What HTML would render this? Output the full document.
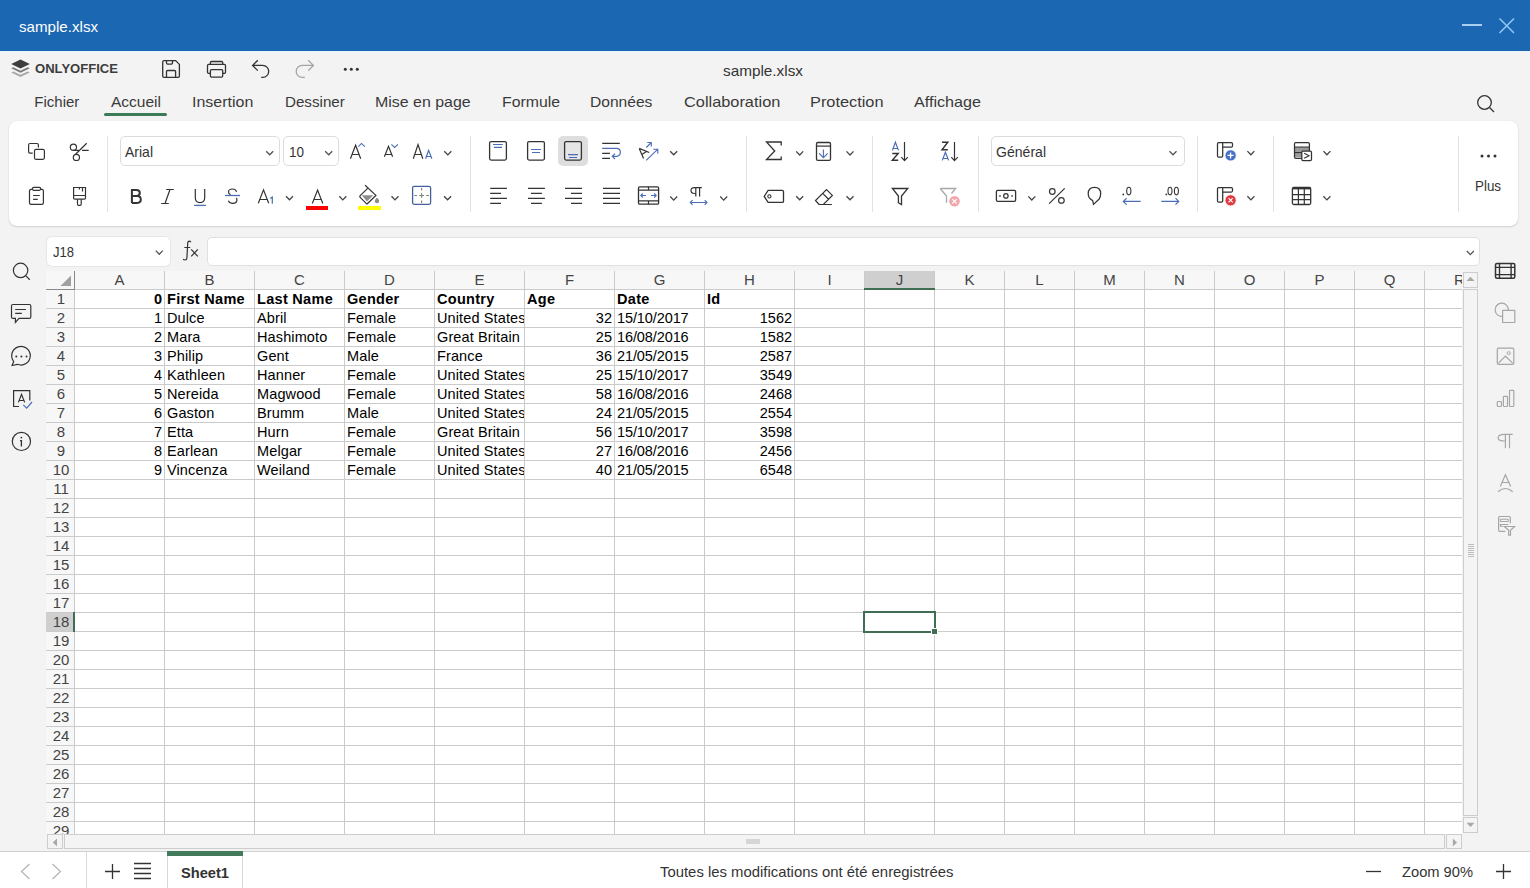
<!DOCTYPE html>
<html><head><meta charset="utf-8"><style>
html,body{margin:0;padding:0;width:1530px;height:888px;overflow:hidden;background:#f3f3f3;}
body{position:relative;font-family:"Liberation Sans",sans-serif;}
.t{position:absolute;white-space:nowrap;}
svg{overflow:visible;}
</style></head><body>
<div style="position:absolute;left:0px;top:0px;width:1530px;height:51px;background:#1c67b1"></div>
<div class="t" style="left:19.00px;top:19.30px;font-size:15px;line-height:15px;color:#ffffff;transform:scaleX(1.0083);transform-origin:0 0;">sample.xlsx</div>
<div style="position:absolute;left:0px;top:51px;width:1530px;height:837px;background:#f3f3f3"></div>
<div style="position:absolute;left:0px;top:51px;width:1530px;height:1px;background:#e4f6fb"></div>
<div class="t" style="left:34.50px;top:62.07px;font-size:13.5px;line-height:13.5px;color:#3d3d3d;font-weight:bold;transform:scaleX(0.9678);transform-origin:0 0;">ONLYOFFICE</div>
<div class="t" style="left:723.00px;top:63.30px;font-size:15px;line-height:15px;color:#333;transform:scaleX(1.0210);transform-origin:0 0;">sample.xlsx</div>
<div class="t" style="left:34.30px;top:94.30px;font-size:15px;line-height:15px;color:#3a3a3a;">Fichier</div>
<div class="t" style="left:111.00px;top:94.30px;font-size:15px;line-height:15px;color:#3a3a3a;transform:scaleX(1.0340);transform-origin:0 0;">Accueil</div>
<div class="t" style="left:192.00px;top:94.30px;font-size:15px;line-height:15px;color:#3a3a3a;transform:scaleX(1.0656);transform-origin:0 0;">Insertion</div>
<div class="t" style="left:284.60px;top:94.30px;font-size:15px;line-height:15px;color:#3a3a3a;transform:scaleX(1.0104);transform-origin:0 0;">Dessiner</div>
<div class="t" style="left:375.00px;top:94.30px;font-size:15px;line-height:15px;color:#3a3a3a;transform:scaleX(1.0627);transform-origin:0 0;">Mise en page</div>
<div class="t" style="left:502.00px;top:94.30px;font-size:15px;line-height:15px;color:#3a3a3a;transform:scaleX(1.0544);transform-origin:0 0;">Formule</div>
<div class="t" style="left:590.20px;top:94.30px;font-size:15px;line-height:15px;color:#3a3a3a;transform:scaleX(1.0393);transform-origin:0 0;">Données</div>
<div class="t" style="left:683.70px;top:94.30px;font-size:15px;line-height:15px;color:#3a3a3a;transform:scaleX(1.0896);transform-origin:0 0;">Collaboration</div>
<div class="t" style="left:810.00px;top:94.30px;font-size:15px;line-height:15px;color:#3a3a3a;transform:scaleX(1.0884);transform-origin:0 0;">Protection</div>
<div class="t" style="left:914.30px;top:94.30px;font-size:15px;line-height:15px;color:#3a3a3a;transform:scaleX(1.0760);transform-origin:0 0;">Affichage</div>
<div style="position:absolute;left:104px;top:113px;width:63px;height:3px;background:#3d7a56;border-radius:2px"></div>
<div style="position:absolute;left:9px;top:121px;width:1509px;height:105px;background:#fff;border-radius:8px;box-shadow:0 1px 2px rgba(0,0,0,0.14),0 0 1px rgba(0,0,0,0.10)"></div>
<div style="position:absolute;left:107px;top:136px;width:1px;height:76px;background:#e3e3e3"></div>
<div style="position:absolute;left:470px;top:136px;width:1px;height:76px;background:#e3e3e3"></div>
<div style="position:absolute;left:746px;top:136px;width:1px;height:76px;background:#e3e3e3"></div>
<div style="position:absolute;left:872px;top:136px;width:1px;height:76px;background:#e3e3e3"></div>
<div style="position:absolute;left:978px;top:136px;width:1px;height:76px;background:#e3e3e3"></div>
<div style="position:absolute;left:1197px;top:136px;width:1px;height:76px;background:#e3e3e3"></div>
<div style="position:absolute;left:1273px;top:136px;width:1px;height:76px;background:#e3e3e3"></div>
<div style="position:absolute;left:1458px;top:136px;width:1px;height:76px;background:#e3e3e3"></div>
<div style="position:absolute;left:120px;top:136px;width:160px;height:30px;background:#fff;border:1px solid #dcdcdc;border-radius:5px;box-sizing:border-box"></div>
<div class="t" style="left:125.00px;top:143.80px;font-size:15px;line-height:15px;color:#333;transform:scaleX(0.9331);transform-origin:0 0;">Arial</div>
<div style="position:absolute;left:283px;top:136px;width:56px;height:30px;background:#fff;border:1px solid #dcdcdc;border-radius:5px;box-sizing:border-box"></div>
<div class="t" style="left:289.00px;top:143.80px;font-size:15px;line-height:15px;color:#333;transform:scaleX(0.8991);transform-origin:0 0;">10</div>
<div style="position:absolute;left:306px;top:206px;width:22px;height:4px;background:#ff0000"></div>
<div style="position:absolute;left:358px;top:206px;width:23px;height:4px;background:#ffff00"></div>
<div style="position:absolute;left:558px;top:136px;width:30px;height:30px;background:#dedede;border-radius:5px"></div>
<div style="position:absolute;left:564px;top:141px;width:18px;height:19px;background:#e6e6e6"></div>
<div style="position:absolute;left:991px;top:136px;width:194px;height:30px;background:#fff;border:1px solid #dcdcdc;border-radius:5px;box-sizing:border-box"></div>
<div class="t" style="left:996.00px;top:144.30px;font-size:15px;line-height:15px;color:#333;transform:scaleX(0.9370);transform-origin:0 0;">Général</div>
<div class="t" style="left:1475.00px;top:178.30px;font-size:15px;line-height:15px;color:#333;transform:scaleX(0.8910);transform-origin:0 0;">Plus</div>
<div style="position:absolute;left:47px;top:237px;width:123px;height:29px;background:#fff;border-radius:5px;box-shadow:0 0 0 1px #e6e6e6"></div>
<div class="t" style="left:52.50px;top:244.30px;font-size:15px;line-height:15px;color:#333;transform:scaleX(0.8684);transform-origin:0 0;">J18</div>
<div style="position:absolute;left:207px;top:237px;width:1273px;height:29px;background:#fff;border-radius:5px;border:1px solid #e0e0e0;box-sizing:border-box"></div>
<div style="position:absolute;left:46px;top:271px;width:1416px;height:563px;overflow:hidden;background:#fff">
<div style="position:absolute;left:0px;top:0px;width:1416px;height:18px;background:#f7f7f7"></div>
<div style="position:absolute;left:0px;top:18px;width:28px;height:545px;background:#f7f7f7"></div>
<div style="position:absolute;left:818px;top:0px;width:70px;height:18px;background:#cfcfcf"></div>
<div style="position:absolute;left:0px;top:341px;width:28px;height:19px;background:#cfcfcf"></div>
<div style="position:absolute;left:28px;top:0px;width:1px;height:563px;background:#cbcbcb"></div>
<div style="position:absolute;left:118px;top:0px;width:1px;height:563px;background:#cbcbcb"></div>
<div style="position:absolute;left:208px;top:0px;width:1px;height:563px;background:#cbcbcb"></div>
<div style="position:absolute;left:298px;top:0px;width:1px;height:563px;background:#cbcbcb"></div>
<div style="position:absolute;left:388px;top:0px;width:1px;height:563px;background:#cbcbcb"></div>
<div style="position:absolute;left:478px;top:0px;width:1px;height:563px;background:#cbcbcb"></div>
<div style="position:absolute;left:568px;top:0px;width:1px;height:563px;background:#cbcbcb"></div>
<div style="position:absolute;left:658px;top:0px;width:1px;height:563px;background:#cbcbcb"></div>
<div style="position:absolute;left:748px;top:0px;width:1px;height:563px;background:#cbcbcb"></div>
<div style="position:absolute;left:818px;top:0px;width:1px;height:563px;background:#cbcbcb"></div>
<div style="position:absolute;left:888px;top:0px;width:1px;height:563px;background:#cbcbcb"></div>
<div style="position:absolute;left:958px;top:0px;width:1px;height:563px;background:#cbcbcb"></div>
<div style="position:absolute;left:1028px;top:0px;width:1px;height:563px;background:#cbcbcb"></div>
<div style="position:absolute;left:1098px;top:0px;width:1px;height:563px;background:#cbcbcb"></div>
<div style="position:absolute;left:1168px;top:0px;width:1px;height:563px;background:#cbcbcb"></div>
<div style="position:absolute;left:1238px;top:0px;width:1px;height:563px;background:#cbcbcb"></div>
<div style="position:absolute;left:1308px;top:0px;width:1px;height:563px;background:#cbcbcb"></div>
<div style="position:absolute;left:1378px;top:0px;width:1px;height:563px;background:#cbcbcb"></div>
<div style="position:absolute;left:1448px;top:0px;width:1px;height:563px;background:#cbcbcb"></div>
<div style="position:absolute;left:1518px;top:0px;width:1px;height:563px;background:#cbcbcb"></div>
<div style="position:absolute;left:0px;top:18px;width:1416px;height:1px;background:#cbcbcb"></div>
<div style="position:absolute;left:0px;top:37px;width:1416px;height:1px;background:#cbcbcb"></div>
<div style="position:absolute;left:0px;top:56px;width:1416px;height:1px;background:#cbcbcb"></div>
<div style="position:absolute;left:0px;top:75px;width:1416px;height:1px;background:#cbcbcb"></div>
<div style="position:absolute;left:0px;top:94px;width:1416px;height:1px;background:#cbcbcb"></div>
<div style="position:absolute;left:0px;top:113px;width:1416px;height:1px;background:#cbcbcb"></div>
<div style="position:absolute;left:0px;top:132px;width:1416px;height:1px;background:#cbcbcb"></div>
<div style="position:absolute;left:0px;top:151px;width:1416px;height:1px;background:#cbcbcb"></div>
<div style="position:absolute;left:0px;top:170px;width:1416px;height:1px;background:#cbcbcb"></div>
<div style="position:absolute;left:0px;top:189px;width:1416px;height:1px;background:#cbcbcb"></div>
<div style="position:absolute;left:0px;top:208px;width:1416px;height:1px;background:#cbcbcb"></div>
<div style="position:absolute;left:0px;top:227px;width:1416px;height:1px;background:#cbcbcb"></div>
<div style="position:absolute;left:0px;top:246px;width:1416px;height:1px;background:#cbcbcb"></div>
<div style="position:absolute;left:0px;top:265px;width:1416px;height:1px;background:#cbcbcb"></div>
<div style="position:absolute;left:0px;top:284px;width:1416px;height:1px;background:#cbcbcb"></div>
<div style="position:absolute;left:0px;top:303px;width:1416px;height:1px;background:#cbcbcb"></div>
<div style="position:absolute;left:0px;top:322px;width:1416px;height:1px;background:#cbcbcb"></div>
<div style="position:absolute;left:0px;top:341px;width:1416px;height:1px;background:#cbcbcb"></div>
<div style="position:absolute;left:0px;top:360px;width:1416px;height:1px;background:#cbcbcb"></div>
<div style="position:absolute;left:0px;top:379px;width:1416px;height:1px;background:#cbcbcb"></div>
<div style="position:absolute;left:0px;top:398px;width:1416px;height:1px;background:#cbcbcb"></div>
<div style="position:absolute;left:0px;top:417px;width:1416px;height:1px;background:#cbcbcb"></div>
<div style="position:absolute;left:0px;top:436px;width:1416px;height:1px;background:#cbcbcb"></div>
<div style="position:absolute;left:0px;top:455px;width:1416px;height:1px;background:#cbcbcb"></div>
<div style="position:absolute;left:0px;top:474px;width:1416px;height:1px;background:#cbcbcb"></div>
<div style="position:absolute;left:0px;top:493px;width:1416px;height:1px;background:#cbcbcb"></div>
<div style="position:absolute;left:0px;top:512px;width:1416px;height:1px;background:#cbcbcb"></div>
<div style="position:absolute;left:0px;top:531px;width:1416px;height:1px;background:#cbcbcb"></div>
<div style="position:absolute;left:0px;top:550px;width:1416px;height:1px;background:#cbcbcb"></div>
<div style="position:absolute;left:0px;top:569px;width:1416px;height:1px;background:#cbcbcb"></div>
<div style="position:absolute;left:0px;top:588px;width:1416px;height:1px;background:#cbcbcb"></div>
<div style="position:absolute;left:28px;top:0px;width:1px;height:19px;background:#8a8a8a"></div>
<div style="position:absolute;left:0px;top:18px;width:29px;height:1px;background:#8a8a8a"></div>
<svg style="position:absolute;left:14px;top:4px" width="12" height="12"><path d="M11 0.5 V11 H0.5 Z" fill="#a0a0a0"/></svg>
<div style="position:absolute;left:818px;top:17px;width:71px;height:2px;background:#3f6e54"></div>
<div style="position:absolute;left:27px;top:341px;width:2px;height:20px;background:#3f6e54"></div>
<div class="t" style="left:68.50px;top:1.30px;font-size:15px;line-height:15px;color:#444;">A</div>
<div class="t" style="left:158.50px;top:1.30px;font-size:15px;line-height:15px;color:#444;">B</div>
<div class="t" style="left:248.08px;top:1.30px;font-size:15px;line-height:15px;color:#444;">C</div>
<div class="t" style="left:338.08px;top:1.30px;font-size:15px;line-height:15px;color:#444;">D</div>
<div class="t" style="left:428.50px;top:1.30px;font-size:15px;line-height:15px;color:#444;">E</div>
<div class="t" style="left:518.92px;top:1.30px;font-size:15px;line-height:15px;color:#444;">F</div>
<div class="t" style="left:607.67px;top:1.30px;font-size:15px;line-height:15px;color:#444;">G</div>
<div class="t" style="left:698.08px;top:1.30px;font-size:15px;line-height:15px;color:#444;">H</div>
<div class="t" style="left:781.42px;top:1.30px;font-size:15px;line-height:15px;color:#444;">I</div>
<div class="t" style="left:849.75px;top:1.30px;font-size:15px;line-height:15px;color:#444;">J</div>
<div class="t" style="left:918.50px;top:1.30px;font-size:15px;line-height:15px;color:#444;">K</div>
<div class="t" style="left:989.33px;top:1.30px;font-size:15px;line-height:15px;color:#444;">L</div>
<div class="t" style="left:1057.25px;top:1.30px;font-size:15px;line-height:15px;color:#444;">M</div>
<div class="t" style="left:1128.08px;top:1.30px;font-size:15px;line-height:15px;color:#444;">N</div>
<div class="t" style="left:1197.67px;top:1.30px;font-size:15px;line-height:15px;color:#444;">O</div>
<div class="t" style="left:1268.50px;top:1.30px;font-size:15px;line-height:15px;color:#444;">P</div>
<div class="t" style="left:1337.67px;top:1.30px;font-size:15px;line-height:15px;color:#444;">Q</div>
<div class="t" style="left:1408.08px;top:1.30px;font-size:15px;line-height:15px;color:#444;">R</div>
<div class="t" style="left:1478.50px;top:1.30px;font-size:15px;line-height:15px;color:#444;">S</div>
<div class="t" style="left:10.83px;top:20.30px;font-size:15px;line-height:15px;color:#444;">1</div>
<div class="t" style="left:10.83px;top:39.30px;font-size:15px;line-height:15px;color:#444;">2</div>
<div class="t" style="left:10.83px;top:58.30px;font-size:15px;line-height:15px;color:#444;">3</div>
<div class="t" style="left:10.83px;top:77.30px;font-size:15px;line-height:15px;color:#444;">4</div>
<div class="t" style="left:10.83px;top:96.30px;font-size:15px;line-height:15px;color:#444;">5</div>
<div class="t" style="left:10.83px;top:115.30px;font-size:15px;line-height:15px;color:#444;">6</div>
<div class="t" style="left:10.83px;top:134.30px;font-size:15px;line-height:15px;color:#444;">7</div>
<div class="t" style="left:10.83px;top:153.30px;font-size:15px;line-height:15px;color:#444;">8</div>
<div class="t" style="left:10.83px;top:172.30px;font-size:15px;line-height:15px;color:#444;">9</div>
<div class="t" style="left:6.66px;top:191.30px;font-size:15px;line-height:15px;color:#444;">10</div>
<div class="t" style="left:7.22px;top:210.30px;font-size:15px;line-height:15px;color:#444;">11</div>
<div class="t" style="left:6.66px;top:229.30px;font-size:15px;line-height:15px;color:#444;">12</div>
<div class="t" style="left:6.66px;top:248.30px;font-size:15px;line-height:15px;color:#444;">13</div>
<div class="t" style="left:6.66px;top:267.30px;font-size:15px;line-height:15px;color:#444;">14</div>
<div class="t" style="left:6.66px;top:286.30px;font-size:15px;line-height:15px;color:#444;">15</div>
<div class="t" style="left:6.66px;top:305.30px;font-size:15px;line-height:15px;color:#444;">16</div>
<div class="t" style="left:6.66px;top:324.30px;font-size:15px;line-height:15px;color:#444;">17</div>
<div class="t" style="left:6.66px;top:343.30px;font-size:15px;line-height:15px;color:#444;">18</div>
<div class="t" style="left:6.66px;top:362.30px;font-size:15px;line-height:15px;color:#444;">19</div>
<div class="t" style="left:6.66px;top:381.30px;font-size:15px;line-height:15px;color:#444;">20</div>
<div class="t" style="left:6.66px;top:400.30px;font-size:15px;line-height:15px;color:#444;">21</div>
<div class="t" style="left:6.66px;top:419.30px;font-size:15px;line-height:15px;color:#444;">22</div>
<div class="t" style="left:6.66px;top:438.30px;font-size:15px;line-height:15px;color:#444;">23</div>
<div class="t" style="left:6.66px;top:457.30px;font-size:15px;line-height:15px;color:#444;">24</div>
<div class="t" style="left:6.66px;top:476.30px;font-size:15px;line-height:15px;color:#444;">25</div>
<div class="t" style="left:6.66px;top:495.30px;font-size:15px;line-height:15px;color:#444;">26</div>
<div class="t" style="left:6.66px;top:514.30px;font-size:15px;line-height:15px;color:#444;">27</div>
<div class="t" style="left:6.66px;top:533.30px;font-size:15px;line-height:15px;color:#444;">28</div>
<div class="t" style="left:6.66px;top:552.30px;font-size:15px;line-height:15px;color:#444;">29</div>
<div class="t" style="left:107.94px;top:20.73px;font-size:14.5px;line-height:14.5px;color:#000;font-weight:bold;">0</div>
<div class="t" style="left:121.00px;top:20.73px;font-size:14.5px;line-height:14.5px;color:#000;font-weight:bold;letter-spacing:0.3px;width:87px;height:20px;overflow:hidden;">First Name</div>
<div class="t" style="left:211.00px;top:20.73px;font-size:14.5px;line-height:14.5px;color:#000;font-weight:bold;letter-spacing:0.3px;width:87px;height:20px;overflow:hidden;">Last Name</div>
<div class="t" style="left:301.00px;top:20.73px;font-size:14.5px;line-height:14.5px;color:#000;font-weight:bold;letter-spacing:0.3px;width:87px;height:20px;overflow:hidden;">Gender</div>
<div class="t" style="left:391.00px;top:20.73px;font-size:14.5px;line-height:14.5px;color:#000;font-weight:bold;letter-spacing:0.3px;width:87px;height:20px;overflow:hidden;">Country</div>
<div class="t" style="left:481.00px;top:20.73px;font-size:14.5px;line-height:14.5px;color:#000;font-weight:bold;letter-spacing:0.3px;width:87px;height:20px;overflow:hidden;">Age</div>
<div class="t" style="left:571.00px;top:20.73px;font-size:14.5px;line-height:14.5px;color:#000;font-weight:bold;letter-spacing:0.3px;width:87px;height:20px;overflow:hidden;">Date</div>
<div class="t" style="left:661.00px;top:20.73px;font-size:14.5px;line-height:14.5px;color:#000;font-weight:bold;letter-spacing:0.3px;width:87px;height:20px;overflow:hidden;">Id</div>
<div class="t" style="left:107.94px;top:39.73px;font-size:14.5px;line-height:14.5px;color:#000;">1</div>
<div class="t" style="left:121.00px;top:39.73px;font-size:14.5px;line-height:14.5px;color:#000;letter-spacing:0.12px;width:87px;height:20px;overflow:hidden;">Dulce</div>
<div class="t" style="left:211.00px;top:39.73px;font-size:14.5px;line-height:14.5px;color:#000;letter-spacing:0.12px;width:87px;height:20px;overflow:hidden;">Abril</div>
<div class="t" style="left:301.00px;top:39.73px;font-size:14.5px;line-height:14.5px;color:#000;letter-spacing:0.12px;width:87px;height:20px;overflow:hidden;">Female</div>
<div class="t" style="left:391.00px;top:39.73px;font-size:14.5px;line-height:14.5px;color:#000;letter-spacing:0.12px;width:87px;height:20px;overflow:hidden;">United States</div>
<div class="t" style="left:549.87px;top:39.73px;font-size:14.5px;line-height:14.5px;color:#000;">32</div>
<div class="t" style="left:571.00px;top:39.73px;font-size:14.5px;line-height:14.5px;color:#000;letter-spacing:-0.1px;width:87px;height:20px;overflow:hidden;">15/10/2017</div>
<div class="t" style="left:713.75px;top:39.73px;font-size:14.5px;line-height:14.5px;color:#000;">1562</div>
<div class="t" style="left:107.94px;top:58.73px;font-size:14.5px;line-height:14.5px;color:#000;">2</div>
<div class="t" style="left:121.00px;top:58.73px;font-size:14.5px;line-height:14.5px;color:#000;letter-spacing:0.12px;width:87px;height:20px;overflow:hidden;">Mara</div>
<div class="t" style="left:211.00px;top:58.73px;font-size:14.5px;line-height:14.5px;color:#000;letter-spacing:0.12px;width:87px;height:20px;overflow:hidden;">Hashimoto</div>
<div class="t" style="left:301.00px;top:58.73px;font-size:14.5px;line-height:14.5px;color:#000;letter-spacing:0.12px;width:87px;height:20px;overflow:hidden;">Female</div>
<div class="t" style="left:391.00px;top:58.73px;font-size:14.5px;line-height:14.5px;color:#000;letter-spacing:0.12px;width:87px;height:20px;overflow:hidden;">Great Britain</div>
<div class="t" style="left:549.87px;top:58.73px;font-size:14.5px;line-height:14.5px;color:#000;">25</div>
<div class="t" style="left:571.00px;top:58.73px;font-size:14.5px;line-height:14.5px;color:#000;letter-spacing:-0.1px;width:87px;height:20px;overflow:hidden;">16/08/2016</div>
<div class="t" style="left:713.75px;top:58.73px;font-size:14.5px;line-height:14.5px;color:#000;">1582</div>
<div class="t" style="left:107.94px;top:77.73px;font-size:14.5px;line-height:14.5px;color:#000;">3</div>
<div class="t" style="left:121.00px;top:77.73px;font-size:14.5px;line-height:14.5px;color:#000;letter-spacing:0.12px;width:87px;height:20px;overflow:hidden;">Philip</div>
<div class="t" style="left:211.00px;top:77.73px;font-size:14.5px;line-height:14.5px;color:#000;letter-spacing:0.12px;width:87px;height:20px;overflow:hidden;">Gent</div>
<div class="t" style="left:301.00px;top:77.73px;font-size:14.5px;line-height:14.5px;color:#000;letter-spacing:0.12px;width:87px;height:20px;overflow:hidden;">Male</div>
<div class="t" style="left:391.00px;top:77.73px;font-size:14.5px;line-height:14.5px;color:#000;letter-spacing:0.12px;width:87px;height:20px;overflow:hidden;">France</div>
<div class="t" style="left:549.87px;top:77.73px;font-size:14.5px;line-height:14.5px;color:#000;">36</div>
<div class="t" style="left:571.00px;top:77.73px;font-size:14.5px;line-height:14.5px;color:#000;letter-spacing:-0.1px;width:87px;height:20px;overflow:hidden;">21/05/2015</div>
<div class="t" style="left:713.75px;top:77.73px;font-size:14.5px;line-height:14.5px;color:#000;">2587</div>
<div class="t" style="left:107.94px;top:96.73px;font-size:14.5px;line-height:14.5px;color:#000;">4</div>
<div class="t" style="left:121.00px;top:96.73px;font-size:14.5px;line-height:14.5px;color:#000;letter-spacing:0.12px;width:87px;height:20px;overflow:hidden;">Kathleen</div>
<div class="t" style="left:211.00px;top:96.73px;font-size:14.5px;line-height:14.5px;color:#000;letter-spacing:0.12px;width:87px;height:20px;overflow:hidden;">Hanner</div>
<div class="t" style="left:301.00px;top:96.73px;font-size:14.5px;line-height:14.5px;color:#000;letter-spacing:0.12px;width:87px;height:20px;overflow:hidden;">Female</div>
<div class="t" style="left:391.00px;top:96.73px;font-size:14.5px;line-height:14.5px;color:#000;letter-spacing:0.12px;width:87px;height:20px;overflow:hidden;">United States</div>
<div class="t" style="left:549.87px;top:96.73px;font-size:14.5px;line-height:14.5px;color:#000;">25</div>
<div class="t" style="left:571.00px;top:96.73px;font-size:14.5px;line-height:14.5px;color:#000;letter-spacing:-0.1px;width:87px;height:20px;overflow:hidden;">15/10/2017</div>
<div class="t" style="left:713.75px;top:96.73px;font-size:14.5px;line-height:14.5px;color:#000;">3549</div>
<div class="t" style="left:107.94px;top:115.73px;font-size:14.5px;line-height:14.5px;color:#000;">5</div>
<div class="t" style="left:121.00px;top:115.73px;font-size:14.5px;line-height:14.5px;color:#000;letter-spacing:0.12px;width:87px;height:20px;overflow:hidden;">Nereida</div>
<div class="t" style="left:211.00px;top:115.73px;font-size:14.5px;line-height:14.5px;color:#000;letter-spacing:0.12px;width:87px;height:20px;overflow:hidden;">Magwood</div>
<div class="t" style="left:301.00px;top:115.73px;font-size:14.5px;line-height:14.5px;color:#000;letter-spacing:0.12px;width:87px;height:20px;overflow:hidden;">Female</div>
<div class="t" style="left:391.00px;top:115.73px;font-size:14.5px;line-height:14.5px;color:#000;letter-spacing:0.12px;width:87px;height:20px;overflow:hidden;">United States</div>
<div class="t" style="left:549.87px;top:115.73px;font-size:14.5px;line-height:14.5px;color:#000;">58</div>
<div class="t" style="left:571.00px;top:115.73px;font-size:14.5px;line-height:14.5px;color:#000;letter-spacing:-0.1px;width:87px;height:20px;overflow:hidden;">16/08/2016</div>
<div class="t" style="left:713.75px;top:115.73px;font-size:14.5px;line-height:14.5px;color:#000;">2468</div>
<div class="t" style="left:107.94px;top:134.73px;font-size:14.5px;line-height:14.5px;color:#000;">6</div>
<div class="t" style="left:121.00px;top:134.73px;font-size:14.5px;line-height:14.5px;color:#000;letter-spacing:0.12px;width:87px;height:20px;overflow:hidden;">Gaston</div>
<div class="t" style="left:211.00px;top:134.73px;font-size:14.5px;line-height:14.5px;color:#000;letter-spacing:0.12px;width:87px;height:20px;overflow:hidden;">Brumm</div>
<div class="t" style="left:301.00px;top:134.73px;font-size:14.5px;line-height:14.5px;color:#000;letter-spacing:0.12px;width:87px;height:20px;overflow:hidden;">Male</div>
<div class="t" style="left:391.00px;top:134.73px;font-size:14.5px;line-height:14.5px;color:#000;letter-spacing:0.12px;width:87px;height:20px;overflow:hidden;">United States</div>
<div class="t" style="left:549.87px;top:134.73px;font-size:14.5px;line-height:14.5px;color:#000;">24</div>
<div class="t" style="left:571.00px;top:134.73px;font-size:14.5px;line-height:14.5px;color:#000;letter-spacing:-0.1px;width:87px;height:20px;overflow:hidden;">21/05/2015</div>
<div class="t" style="left:713.75px;top:134.73px;font-size:14.5px;line-height:14.5px;color:#000;">2554</div>
<div class="t" style="left:107.94px;top:153.73px;font-size:14.5px;line-height:14.5px;color:#000;">7</div>
<div class="t" style="left:121.00px;top:153.73px;font-size:14.5px;line-height:14.5px;color:#000;letter-spacing:0.12px;width:87px;height:20px;overflow:hidden;">Etta</div>
<div class="t" style="left:211.00px;top:153.73px;font-size:14.5px;line-height:14.5px;color:#000;letter-spacing:0.12px;width:87px;height:20px;overflow:hidden;">Hurn</div>
<div class="t" style="left:301.00px;top:153.73px;font-size:14.5px;line-height:14.5px;color:#000;letter-spacing:0.12px;width:87px;height:20px;overflow:hidden;">Female</div>
<div class="t" style="left:391.00px;top:153.73px;font-size:14.5px;line-height:14.5px;color:#000;letter-spacing:0.12px;width:87px;height:20px;overflow:hidden;">Great Britain</div>
<div class="t" style="left:549.87px;top:153.73px;font-size:14.5px;line-height:14.5px;color:#000;">56</div>
<div class="t" style="left:571.00px;top:153.73px;font-size:14.5px;line-height:14.5px;color:#000;letter-spacing:-0.1px;width:87px;height:20px;overflow:hidden;">15/10/2017</div>
<div class="t" style="left:713.75px;top:153.73px;font-size:14.5px;line-height:14.5px;color:#000;">3598</div>
<div class="t" style="left:107.94px;top:172.73px;font-size:14.5px;line-height:14.5px;color:#000;">8</div>
<div class="t" style="left:121.00px;top:172.73px;font-size:14.5px;line-height:14.5px;color:#000;letter-spacing:0.12px;width:87px;height:20px;overflow:hidden;">Earlean</div>
<div class="t" style="left:211.00px;top:172.73px;font-size:14.5px;line-height:14.5px;color:#000;letter-spacing:0.12px;width:87px;height:20px;overflow:hidden;">Melgar</div>
<div class="t" style="left:301.00px;top:172.73px;font-size:14.5px;line-height:14.5px;color:#000;letter-spacing:0.12px;width:87px;height:20px;overflow:hidden;">Female</div>
<div class="t" style="left:391.00px;top:172.73px;font-size:14.5px;line-height:14.5px;color:#000;letter-spacing:0.12px;width:87px;height:20px;overflow:hidden;">United States</div>
<div class="t" style="left:549.87px;top:172.73px;font-size:14.5px;line-height:14.5px;color:#000;">27</div>
<div class="t" style="left:571.00px;top:172.73px;font-size:14.5px;line-height:14.5px;color:#000;letter-spacing:-0.1px;width:87px;height:20px;overflow:hidden;">16/08/2016</div>
<div class="t" style="left:713.75px;top:172.73px;font-size:14.5px;line-height:14.5px;color:#000;">2456</div>
<div class="t" style="left:107.94px;top:191.73px;font-size:14.5px;line-height:14.5px;color:#000;">9</div>
<div class="t" style="left:121.00px;top:191.73px;font-size:14.5px;line-height:14.5px;color:#000;letter-spacing:0.12px;width:87px;height:20px;overflow:hidden;">Vincenza</div>
<div class="t" style="left:211.00px;top:191.73px;font-size:14.5px;line-height:14.5px;color:#000;letter-spacing:0.12px;width:87px;height:20px;overflow:hidden;">Weiland</div>
<div class="t" style="left:301.00px;top:191.73px;font-size:14.5px;line-height:14.5px;color:#000;letter-spacing:0.12px;width:87px;height:20px;overflow:hidden;">Female</div>
<div class="t" style="left:391.00px;top:191.73px;font-size:14.5px;line-height:14.5px;color:#000;letter-spacing:0.12px;width:87px;height:20px;overflow:hidden;">United States</div>
<div class="t" style="left:549.87px;top:191.73px;font-size:14.5px;line-height:14.5px;color:#000;">40</div>
<div class="t" style="left:571.00px;top:191.73px;font-size:14.5px;line-height:14.5px;color:#000;letter-spacing:-0.1px;width:87px;height:20px;overflow:hidden;">21/05/2015</div>
<div class="t" style="left:713.75px;top:191.73px;font-size:14.5px;line-height:14.5px;color:#000;">6548</div>
<div style="position:absolute;left:817px;top:340px;width:72px;height:2px;background:#3f6e54"></div>
<div style="position:absolute;left:817px;top:360px;width:68px;height:2px;background:#3f6e54"></div>
<div style="position:absolute;left:817px;top:340px;width:2px;height:22px;background:#3f6e54"></div>
<div style="position:absolute;left:888px;top:340px;width:2px;height:17px;background:#3f6e54"></div>
<div style="position:absolute;left:885px;top:357px;width:7px;height:7px;background:#fff"></div>
<div style="position:absolute;left:886px;top:358px;width:5px;height:5px;background:#3f6e54"></div>
</div>
<div style="position:absolute;left:1462px;top:271px;width:18px;height:564px;background:#f3f3f3"></div>
<div style="position:absolute;left:1463px;top:272px;width:15px;height:16px;background:#f4f4f4;border:1px solid #cdcdcd;box-sizing:border-box"></div>
<svg style="position:absolute;left:1466px;top:276px;" width="9" height="6" viewBox="0 0 9 6" fill="none" stroke="#3d3d3d" stroke-width="1"><path d="M0.5 5 L4.5 0.8 L8.5 5 Z" fill="#a8a8a8" stroke="none"/></svg>
<div style="position:absolute;left:1463px;top:289px;width:15px;height:527px;background:#f4f4f4;border:1px solid #cdcdcd;box-sizing:border-box"></div>
<div style="position:absolute;left:1468px;top:544px;width:6px;height:1px;background:#bdbdbd"></div>
<div style="position:absolute;left:1468px;top:546px;width:6px;height:1px;background:#bdbdbd"></div>
<div style="position:absolute;left:1468px;top:548px;width:6px;height:1px;background:#bdbdbd"></div>
<div style="position:absolute;left:1468px;top:550px;width:6px;height:1px;background:#bdbdbd"></div>
<div style="position:absolute;left:1468px;top:552px;width:6px;height:1px;background:#bdbdbd"></div>
<div style="position:absolute;left:1468px;top:554px;width:6px;height:1px;background:#bdbdbd"></div>
<div style="position:absolute;left:1468px;top:556px;width:6px;height:1px;background:#bdbdbd"></div>
<div style="position:absolute;left:1463px;top:817px;width:15px;height:16px;background:#f4f4f4;border:1px solid #cdcdcd;box-sizing:border-box"></div>
<svg style="position:absolute;left:1466px;top:822px;" width="9" height="6" viewBox="0 0 9 6" fill="none" stroke="#3d3d3d" stroke-width="1"><path d="M0.5 0.8 L4.5 5 L8.5 0.8 Z" fill="#a8a8a8" stroke="none"/></svg>
<div style="position:absolute;left:46px;top:834px;width:1416px;height:15px;background:#f3f3f3"></div>
<div style="position:absolute;left:47px;top:834px;width:16px;height:15px;background:#f4f4f4;border:1px solid #cdcdcd;box-sizing:border-box"></div>
<svg style="position:absolute;left:52px;top:838px;" width="6" height="9" viewBox="0 0 6 9" fill="none" stroke="#3d3d3d" stroke-width="1"><path d="M5 0.5 L0.8 4.5 L5 8.5 Z" fill="#a8a8a8" stroke="none"/></svg>
<div style="position:absolute;left:64px;top:834px;width:1381px;height:15px;background:#f4f4f4;border:1px solid #cdcdcd;box-sizing:border-box"></div>
<div style="position:absolute;left:746px;top:839px;width:14px;height:5px;background:#d6d6d6"></div>
<div style="position:absolute;left:1446px;top:834px;width:16px;height:15px;background:#f4f4f4;border:1px solid #cdcdcd;box-sizing:border-box"></div>
<svg style="position:absolute;left:1452px;top:838px;" width="6" height="9" viewBox="0 0 6 9" fill="none" stroke="#3d3d3d" stroke-width="1"><path d="M0.8 0.5 L5 4.5 L0.8 8.5 Z" fill="#a8a8a8" stroke="none"/></svg>
<div style="position:absolute;left:0px;top:851px;width:1530px;height:37px;background:#fff"></div>
<div style="position:absolute;left:0px;top:851px;width:1530px;height:1px;background:#d0d0d0"></div>
<div style="position:absolute;left:86px;top:852px;width:1px;height:36px;background:#dadada"></div>
<div style="position:absolute;left:167px;top:851px;width:76px;height:37px;background:#fff;border-left:1px solid #d8d8d8;border-right:1px solid #d8d8d8;box-sizing:border-box"></div>
<div style="position:absolute;left:167px;top:851px;width:76px;height:5px;background:#437a5c"></div>
<div class="t" style="left:180.50px;top:865.30px;font-size:15px;line-height:15px;color:#333;font-weight:bold;transform:scaleX(0.9759);transform-origin:0 0;">Sheet1</div>
<div class="t" style="left:660.40px;top:864.30px;font-size:15px;line-height:15px;color:#333;transform:scaleX(0.9913);transform-origin:0 0;">Toutes les modifications ont été enregistrées</div>
<div class="t" style="left:1402.00px;top:864.30px;font-size:15px;line-height:15px;color:#333;transform:scaleX(0.9789);transform-origin:0 0;">Zoom 90%</div>
<svg style="position:absolute;left:0;top:0" width="1530" height="888" viewBox="0 0 1530 888" fill="none"><path d="M1462 25 H1482" stroke="#a9cdee" stroke-width="2" /><path d="M1499.5 18.5 L1514 33 M1514 18.5 L1499.5 33" stroke="#8ec5f4" stroke-width="1.6" /><path d="M20.5 59.5 L29.8 64 L20.5 68.4 L11.2 64 Z" fill="#3d3d3d" stroke="none"/><path d="M11.2 68.3 L13.4 67.3 L20.5 70.7 L27.6 67.3 L29.8 68.3 L20.5 72.8 Z" fill="#7a7a7a" stroke="none"/><path d="M11.2 72.4 L13.4 71.4 L20.5 74.8 L27.6 71.4 L29.8 72.4 L20.5 76.9 Z" fill="#a8a8a8" stroke="none"/><path d="M162.7 62 Q162.7 60.6 164.1 60.6 H175.6 L179.4 64.4 V75.9 Q179.4 77.3 178 77.3 H164.1 Q162.7 77.3 162.7 75.9 Z" stroke="#333333" stroke-width="1.3" /><path d="M166.5 60.6 V63 Q166.5 64.1 167.6 64.1 H171.4 Q172.5 64.1 172.5 63 V60.6" stroke="#333333" stroke-width="1.3" /><path d="M166.5 77.3 V71.6 Q166.5 70.5 167.6 70.5 H174.5 Q175.6 70.5 175.6 71.6 V77.3" stroke="#333333" stroke-width="1.3" /><path d="M210.4 64.4 V62.6 Q210.4 61.5 211.5 61.5 H221.6 Q222.7 61.5 222.7 62.6 V64.4" stroke="#333333" stroke-width="1.3" /><path d="M210.4 73.3 H208.6 Q207.5 73.3 207.5 72.2 V65.5 Q207.5 64.4 208.6 64.4 H224.4 Q225.5 64.4 225.5 65.5 V72.2 Q225.5 73.3 224.4 73.3 H222.7" stroke="#333333" stroke-width="1.3" /><path d="M210.4 70.7 Q210.4 69.6 211.5 69.6 H221.6 Q222.7 69.6 222.7 70.7 V76.1 Q222.7 77.2 221.6 77.2 H211.5 Q210.4 77.2 210.4 76.1 Z" stroke="#333333" stroke-width="1.3" /><path d="M257.8 60.2 L252.6 65.4 L257.8 70.6 M252.6 65.4 H262.7 A6 6 0 0 1 262.7 77.4 H261.2" stroke="#333333" stroke-width="1.3" /><path d="M308.2 60.2 L313.4 65.4 L308.2 70.6 M313.4 65.4 H302.2 A6 6 0 0 0 302.2 77.4 H304.8" stroke="#a3a3a3" stroke-width="1.3" /><circle cx="345.3" cy="69.3" r="1.5" fill="#333" stroke="none"/><circle cx="351.3" cy="69.3" r="1.5" fill="#333" stroke="none"/><circle cx="357.3" cy="69.3" r="1.5" fill="#333" stroke="none"/><circle cx="1484.5" cy="102.5" r="6.8" stroke="#333" stroke-width="1.3" fill="none"/><path d="M1489.5 107.5 L1494 112" stroke="#333" stroke-width="1.3" /><path d="M32.7 153.1 H30 Q28.6 153.1 28.6 151.7 V144.9 Q28.6 143.5 30 143.5 H37 Q38.4 143.5 38.4 144.9 V147.6" stroke="#333333" stroke-width="1.2" /><rect x="34.5" y="149.4" width="9.899999999999999" height="9.900000000000006" rx="1.5" stroke="#333333" stroke-width="1.2" fill="none"/><circle cx="73.4" cy="147.3" r="3.1" stroke="#333333" stroke-width="1.2" fill="none"/><circle cx="76.4" cy="157.4" r="3.1" stroke="#333333" stroke-width="1.2" fill="none"/><path d="M73.4 150.4 H79.6 M75.6 154.3 L86.7 143.3 M82 150.4 H88.7" stroke="#333333" stroke-width="1.2" /><rect x="29.5" y="189.3" width="13.899999999999999" height="15.099999999999994" rx="1.6" stroke="#333333" stroke-width="1.2" fill="none"/><rect x="32.5" y="187.4" width="8.100000000000001" height="2.9000000000000057" rx="1.2" stroke="#333333" stroke-width="1.2" fill="#fff"/><path d="M33.1 195.5 H39.8 M33.1 199.4 H37.7" stroke="#333333" stroke-width="1.2" /><path d="M73.6 187.5 H85.5 V198 Q85.5 199.2 84.3 199.2 H74.8 Q73.6 199.2 73.6 198 Z M73.6 195.5 H85.5 M79.4 187.5 V189.5 M82.5 187.5 V191.5" stroke="#333333" stroke-width="1.2" /><path d="M77.5 199.2 V204.2 Q77.5 205.3 78.6 205.3 H80.1 Q81.2 205.3 81.2 204.2 V199.2" stroke="#333333" stroke-width="1.2" /><path d="M350.4 158.7 L355.6 145.2 L360.7 158.7 M352.1 154.5 H359.1" stroke="#333333" stroke-width="1.2" /><path d="M358.3 146.6 L361.5 143.4 L364.8 146.6" stroke="#4b6cb7" stroke-width="1.1" /><path d="M384.4 156.7 L388.5 146.3 L392.6 156.7 M385.8 154.5 H391.2" stroke="#333333" stroke-width="1.2" /><path d="M391.4 144.3 L394.6 147.4 L397.9 144.3" stroke="#4b6cb7" stroke-width="1.1" /><path d="M413.3 158.7 L418 144.6 L422.8 158.7 M414.9 154.5 H421.2" stroke="#333333" stroke-width="1.2" /><path d="M425.6 158.7 L428.6 150.4 L431.9 158.7 M426.6 156.5 H430.9" stroke="#4b6cb7" stroke-width="1.2" /><path d="M444.3 151.3 L447.8 154.9 L451.3 151.3" stroke="#444" stroke-width="1.3" /><path d="M131.9 202.9 V189.9 H136.4 Q139.8 189.9 139.8 193 Q139.8 196.1 136.4 196.1 H131.9 M136.4 196.1 H137.1 Q140.8 196.1 140.8 199.5 Q140.8 202.9 137.1 202.9 H131.9" stroke="#333333" stroke-width="2" /><path d="M166.2 189.5 H173.8 M161.2 203.5 H168.8 M170 189.5 L165 203.5" stroke="#333333" stroke-width="1.2" /><path d="M195.3 188.9 V197.6 Q195.3 202.7 200 202.7 Q204.7 202.7 204.7 197.6 V188.9" stroke="#333333" stroke-width="1.2" /><path d="M194.1 205.4 H205.9" stroke="#4b6cb7" stroke-width="1.3" /><path d="M236.6 191.7 Q235.5 189 232.6 189 Q228.5 189 228.5 192 Q228.5 193.9 230.5 194.6 M236.5 197.9 Q236.9 199 236.9 200 Q236.9 203.4 232.8 203.4 Q229.5 203.4 228.3 200.8" stroke="#333333" stroke-width="1.2" /><path d="M225 195.5 H240" stroke="#4b6cb7" stroke-width="1.3" /><path d="M258.3 203.2 L263.5 189.8 L268.7 203.2 M260.1 199.5 H266.9" stroke="#333333" stroke-width="1.2" /><path d="M270.2 198.6 L272.3 197.2 V203.7" stroke="#4b6cb7" stroke-width="1.2" /><path d="M286 196.2 L289.5 199.79999999999998 L293 196.2" stroke="#444" stroke-width="1.3" /><path d="M312.3 203.5 L317.6 190.1 L322.8 203.5 M313.9 199.5 H321.3" stroke="#333333" stroke-width="1.2" /><path d="M339.3 196.3 L342.8 199.9 L346.3 196.3" stroke="#444" stroke-width="1.3" /><path d="M365.1 185.2 L375.9 195.4 L367.3 203.8 Q367 204.1 366.7 203.8 L360.2 197.3 Q359.4 196.5 360.2 195.7 L367.6 188.4" stroke="#333333" stroke-width="1.2" /><path d="M361.8 195.2 H373.2 L367 201.6 Z" fill="#8c8c8c" stroke="none"/><path d="M377 197.5 Q379.2 200 379.2 201 A2.2 2.2 0 0 1 374.8 201 Q374.8 200 377 197.5 Z" fill="#8c8c8c" stroke="none"/><path d="M391.5 196.3 L395.0 199.9 L398.5 196.3" stroke="#444" stroke-width="1.3" /><rect x="412.6" y="186.4" width="18.0" height="17.900000000000006" rx="1.5" stroke="#465f9e" stroke-width="1.3" fill="none"/><path d="M421.6 188 V190.6 M421.6 193.2 V197.8 M421.6 200.4 V203 M414.2 195.5 H417.1 M419.2 195.5 H424 M426.1 195.5 H429" stroke="#85877a" stroke-width="1.2" /><path d="M444.1 196.2 L447.6 199.79999999999998 L451.1 196.2" stroke="#444" stroke-width="1.3" /><rect x="489.6" y="141.6" width="16.799999999999955" height="18.5" rx="1.5" stroke="#333333" stroke-width="1.3" fill="none"/><path d="M493 144.5 H502.8 M494 147.4 H502" stroke="#4b6cb7" stroke-width="1.2" /><rect x="527.6" y="141.6" width="16.799999999999955" height="18.5" rx="1.5" stroke="#333333" stroke-width="1.3" fill="none"/><path d="M531 149.5 H541 M532 152.5 H540" stroke="#4b6cb7" stroke-width="1.2" /><rect x="564.6" y="141.6" width="16.799999999999955" height="18.5" rx="1.5" stroke="#333333" stroke-width="1.3" fill="none"/><path d="M568 154.6 H578 M569 157.5 H577" stroke="#4b6cb7" stroke-width="1.2" /><path d="M602.2 143.4 H619.8 M602.2 153.4 H610 M602.2 158.4 H610" stroke="#333333" stroke-width="1.2" /><path d="M602.2 148.4 H617 A4 4 0 0 1 617 156.3 H612.3 M615 153.6 L612.3 156.3 L615 159" stroke="#4b6cb7" stroke-width="1.2" /><path d="M639.2 148.4 L649.2 152.5 M639.2 148.4 L643.6 158.4 M641.8 154.6 L646.8 151.3" stroke="#333333" stroke-width="1.2" /><path d="M646.3 147.5 L651.3 142.5 M647.3 142.5 H651.3 V146.5 M646.3 160.4 L657.8 149.2 M653.3 149.2 H657.8 V153.7" stroke="#4b6cb7" stroke-width="1.1" /><path d="M670.2 151.2 L673.7 154.79999999999998 L677.2 151.2" stroke="#444" stroke-width="1.3" /><path d="M490.2 188.4 H506.9 M490.2 193.4 H501 M490.2 198.4 H506.9 M490.2 203.4 H501 " stroke="#333333" stroke-width="1.3" /><path d="M528 188.4 H544.9 M531 193.4 H541.9 M528 198.4 H544.9 M531 203.4 H541.9 " stroke="#333333" stroke-width="1.3" /><path d="M565 188.4 H582 M571 193.4 H582 M565 198.4 H582 M571 203.4 H582 " stroke="#333333" stroke-width="1.3" /><path d="M603 188.4 H620 M603 193.4 H620 M603 198.4 H620 M603 203.4 H620 " stroke="#333333" stroke-width="1.3" /><rect x="638.5" y="186.8" width="20.100000000000023" height="17.399999999999977" rx="1.3" stroke="#333333" stroke-width="1.3" fill="none"/><path d="M638.5 190.2 H658.6 M638.5 200.8 H658.6 M648.5 186.8 V190.2 M648.5 200.8 V204.2" stroke="#333333" stroke-width="1.2" /><path d="M640.8 195.5 H646 M642.8 193.5 L640.8 195.5 L642.8 197.5 M651 195.5 H656.2 M654.2 193.5 L656.2 195.5 L654.2 197.5" stroke="#4b6cb7" stroke-width="1.1" /><path d="M670.2 196.5 L673.7 200.1 L677.2 196.5" stroke="#444" stroke-width="1.3" /><path d="M695.8 187.7 V196.5 M699.6 187.7 V196.5 M701.8 187.7 H694.5 Q691 187.7 691 190.6 Q691 193.5 694.5 193.5 H695.8" stroke="#333333" stroke-width="1.2" /><path d="M690.3 202.5 H707 M692.6 200.2 L690.3 202.5 L692.6 204.8 M704.7 200.2 L707 202.5 L704.7 204.8" stroke="#4b6cb7" stroke-width="1.1" /><path d="M720.2 196.5 L723.7 200.1 L727.2 196.5" stroke="#444" stroke-width="1.3" /><path d="M781.2 145.5 V142 H766.5 L774.7 151 L766.5 159.5 H781.2 V156.6" stroke="#333333" stroke-width="1.3" /><path d="M796.2 151.4 L799.7 155.0 L803.2 151.4" stroke="#444" stroke-width="1.3" /><rect x="816.5" y="142.5" width="14.0" height="17.80000000000001" rx="1.3" stroke="#333333" stroke-width="1.3" fill="none"/><path d="M816.5 146.1 H830.5" stroke="#333333" stroke-width="1.2" /><path d="M823.4 149.4 V157.6 M819.1 153.3 L823.4 157.6 L827.7 153.3" stroke="#4b6cb7" stroke-width="1.1" /><path d="M846.5 151.4 L850.0 155.0 L853.5 151.4" stroke="#444" stroke-width="1.3" /><path d="M892.4 150.4 L895.4 142.3 L898.5 150.4 M893.2 148.5 H897.7" stroke="#4b6cb7" stroke-width="1.2" /><path d="M892.3 153.5 H898.2 L892.3 160.3 H898.2" stroke="#333333" stroke-width="1.4" /><path d="M904.5 142 V160.6 M901.3 157.2 L904.5 160.6 L907.8 157.2" stroke="#333333" stroke-width="1.2" /><path d="M942 142.3 H947.8 L942 149.7 H947.8" stroke="#333333" stroke-width="1.4" /><path d="M942.3 160.4 L945.4 152.2 L948.6 160.4 M943.1 158.5 H947.8" stroke="#4b6cb7" stroke-width="1.2" /><path d="M954.5 142 V160.6 M951.3 157.2 L954.5 160.6 L957.8 157.2" stroke="#333333" stroke-width="1.2" /><path d="M768.1 190.4 H782.3 Q783.5 190.4 783.5 191.6 V201.2 Q783.5 202.4 782.3 202.4 H768.1 L764.2 196.4 Z" stroke="#333333" stroke-width="1.3" /><circle cx="769.4" cy="196.4" r="1.6" stroke="#333333" stroke-width="1.1" fill="none"/><path d="M796.2 196.2 L799.7 199.79999999999998 L803.2 196.2" stroke="#444" stroke-width="1.3" /><path d="M819.1 204.5 L815.5 200.5 L826.5 189.5 L832.4 195.4 L823.4 204.5 Z M822.7 193.4 L828.6 199.2 M823.4 204.5 H831.9" stroke="#333333" stroke-width="1.2" /><path d="M846.5 196.2 L850.0 199.79999999999998 L853.5 196.2" stroke="#444" stroke-width="1.3" /><path d="M892.4 188.5 H907.8 L901.5 196.1 V204.5 L898.4 202.7 V196.1 Z" stroke="#333333" stroke-width="1.3" /><path d="M940.2 188.5 H955.6 L951.5 193.5 M940.2 188.5 L946.5 196 V202.7" stroke="#a8a8a8" stroke-width="1.3" /><circle cx="954.5" cy="201.3" r="5.3" stroke="none" stroke-width="0" fill="#f2a6ab"/><path d="M952.3 199.1 L956.7 203.5 M956.7 199.1 L952.3 203.5" stroke="#ffffff" stroke-width="1.2" /><rect x="996.4" y="190.3" width="19.200000000000045" height="11.0" rx="1.2" stroke="#333333" stroke-width="1.3" fill="none"/><circle cx="1005.9" cy="195.9" r="2.2" stroke="#333333" stroke-width="1.2" fill="none"/><rect x="999.2" y="195.2" width="1.5" height="1.5" fill="#333333"/><rect x="1011.3" y="195.2" width="1.5" height="1.5" fill="#333333"/><path d="M1028.3 196.4 L1031.8 200.0 L1035.3 196.4" stroke="#444" stroke-width="1.3" /><circle cx="1052.3" cy="191.5" r="2.8" stroke="#333333" stroke-width="1.2" fill="none"/><circle cx="1061.4" cy="200.4" r="2.8" stroke="#333333" stroke-width="1.2" fill="none"/><path d="M1049.1 203.6 L1064.7 188.4" stroke="#333333" stroke-width="1.2" /><path d="M1092.7 200.6 Q1088.2 198.6 1088.2 193.6 Q1088.2 187.3 1094.5 187.3 Q1100.7 187.3 1100.7 193.6 Q1100.7 196.6 1099.2 199 L1093.5 204.4 Z" stroke="#333333" stroke-width="1.25" /><circle cx="1123.3" cy="194.4" r="0.9" fill="#333333" stroke="none"/><ellipse cx="1128.8" cy="191.1" rx="2.1" ry="3.8" stroke="#333333" stroke-width="1.1" fill="none"/><path d="M1123.3 201.4 H1140.7 M1126.6 198.2 L1123.3 201.4 L1126.6 204.6" stroke="#4b6cb7" stroke-width="1.2" /><circle cx="1166.3" cy="194.4" r="0.9" fill="#333333" stroke="none"/><ellipse cx="1170" cy="191.1" rx="2" ry="3.8" stroke="#333333" stroke-width="1.1" fill="none"/><ellipse cx="1176.4" cy="191.1" rx="2" ry="3.8" stroke="#333333" stroke-width="1.1" fill="none"/><path d="M1161.3 201.4 H1178.7 M1175.5 198.2 L1178.7 201.4 L1175.5 204.6" stroke="#4b6cb7" stroke-width="1.2" /><path d="M1218.7 142.6 H1231.3 Q1232.5 142.6 1232.5 143.79999999999998 V145.9 Q1232.5 147.1 1231.3 147.1 H1222.7 V156.0 Q1222.7 157.2 1221.5 157.2 H1218.7 Q1217.5 157.2 1217.5 156.0 V143.79999999999998 Q1217.5 142.6 1218.7 142.6 Z M1222.7 142.6 V147.1" stroke="#333333" stroke-width="1.25" /><circle cx="1230.6" cy="155.4" r="5.6" stroke="#fff" stroke-width="0.8" fill="#4470c8"/><path d="M1230.6 152.4 V158.4 M1227.6 155.4 H1233.6" stroke="#fff" stroke-width="1.3" /><path d="M1218.7 187.5 H1231.3 Q1232.5 187.5 1232.5 188.7 V190.8 Q1232.5 192.0 1231.3 192.0 H1222.7 V200.9 Q1222.7 202.1 1221.5 202.1 H1218.7 Q1217.5 202.1 1217.5 200.9 V188.7 Q1217.5 187.5 1218.7 187.5 Z M1222.7 187.5 V192.0" stroke="#333333" stroke-width="1.25" /><circle cx="1230.6" cy="200.3" r="5.6" stroke="#fff" stroke-width="0.8" fill="#e0393e"/><path d="M1228.5 198.20000000000002 L1232.7 202.4 M1232.7 198.20000000000002 L1228.5 202.4" stroke="#fff" stroke-width="1.2" /><path d="M1247.4 151.1 L1250.9 154.7 L1254.4 151.1" stroke="#444" stroke-width="1.3" /><path d="M1247.4 196.3 L1250.9 199.9 L1254.4 196.3" stroke="#444" stroke-width="1.3" /><path d="M1294.5 147 H1309.4 V152 H1294.5 Z M1294.5 153.2 H1309.4 V157.2 H1294.5 Z" fill="#9a9a9a" stroke="none"/><rect x="1294.5" y="142.6" width="14.900000000000091" height="15.700000000000017" rx="1.3" stroke="#333333" stroke-width="1.25" fill="none"/><path d="M1294.5 147 H1309.4 M1294.5 152.6 H1309.4" stroke="#333333" stroke-width="1.1" /><rect x="1301.8" y="151.1" width="9.700000000000045" height="9.5" rx="1.3" stroke="#333333" stroke-width="1.25" fill="#fff"/><path d="M1304.2 153.3 L1309 155.8 L1304.2 158.3" stroke="#333333" stroke-width="1.1" /><path d="M1323.4 151.1 L1326.9 154.7 L1330.4 151.1" stroke="#444" stroke-width="1.3" /><rect x="1292.4" y="187.5" width="18.299999999999955" height="17.0" rx="1.5" stroke="#333333" stroke-width="1.3" fill="none"/><path d="M1292.6 188.4 H1310.5" stroke="#333333" stroke-width="2" /><path d="M1292.4 194.7 H1310.7 M1292.4 199.7 H1310.7 M1298.4 188.5 V204.5 M1304.3 188.5 V204.5" stroke="#333333" stroke-width="1.2" /><path d="M1323.4 196.3 L1326.9 199.9 L1330.4 196.3" stroke="#444" stroke-width="1.3" /><circle cx="1482" cy="156" r="1.5" fill="#333" stroke="none"/><circle cx="1488.5" cy="156" r="1.5" fill="#333" stroke="none"/><circle cx="1495" cy="156" r="1.5" fill="#333" stroke="none"/><path d="M266.2 151.2 L269.7 154.79999999999998 L273.2 151.2" stroke="#555" stroke-width="1.3" /><path d="M325.2 151.2 L328.7 154.79999999999998 L332.2 151.2" stroke="#555" stroke-width="1.3" /><path d="M1169.5 151.2 L1173.0 154.79999999999998 L1176.5 151.2" stroke="#555" stroke-width="1.3" /><path d="M155.8 250.6 L159.3 254.2 L162.8 250.6" stroke="#555" stroke-width="1.3" /><path d="M190.8 242.3 Q190.3 241.2 189.2 241.2 Q187.8 241.2 187.7 243.5 L186.9 258 Q186.8 260 185 260 Q183.6 260 183.3 259" stroke="#333333" stroke-width="1.2" /><path d="M184.3 247.5 H190.2 M191.2 249.3 L197.8 256.4 M197.8 249.3 L191.2 256.4" stroke="#333333" stroke-width="1.2" /><path d="M1466.8 251 L1470.3 254.6 L1473.8 251" stroke="#555" stroke-width="1.3" /><circle cx="20.6" cy="270.4" r="7.2" stroke="#333333" stroke-width="1.2" fill="none"/><path d="M25.9 275.9 L29.8 279.7" stroke="#333333" stroke-width="1.2" /><path d="M13 304.5 H29.3 Q30.8 304.5 30.8 306 V316.9 Q30.8 318.4 29.3 318.4 H19 L15.4 322.5 V318.4 H13 Q11.5 318.4 11.5 316.9 V306 Q11.5 304.5 13 304.5 Z" stroke="#333333" stroke-width="1.2" /><path d="M15.2 309.5 H25.9 M15.2 313.4 H21.8" stroke="#333333" stroke-width="1.2" /><path d="M13.7 361.5 A9.3 9.3 0 1 1 17.4 364.3 L12.1 365.5 Z" stroke="#333333" stroke-width="1.2" /><circle cx="16.3" cy="356.6" r="1" fill="#333333" stroke="none"/><circle cx="21.4" cy="356.6" r="1" fill="#333333" stroke="none"/><circle cx="26.5" cy="356.6" r="1" fill="#333333" stroke="none"/><path d="M19 406.5 H13.6 V390.7 H29.8 V400.4" stroke="#333333" stroke-width="1.2" /><path d="M18.4 402.4 L21.5 394.3 L24.7 402.4 M19.3 400.5 H23.7" stroke="#333333" stroke-width="1.2" /><path d="M23.3 404.9 L26.7 408.1 L32 402" stroke="#4b6cb7" stroke-width="1.2" /><circle cx="21.4" cy="441.4" r="9.1" stroke="#333333" stroke-width="1.2" fill="none"/><circle cx="21.35" cy="437.6" r="0.9" fill="#333333" stroke="none"/><path d="M20 440.6 H21.4 V446.5" stroke="#333333" stroke-width="1.3" /><rect x="1495.5" y="263.5" width="19.299999999999955" height="14.800000000000011" rx="1.5" stroke="#333" stroke-width="1.5" fill="none"/><path d="M1499.5 263.5 V278.3 M1511.1 263.5 V278.3 M1495.5 267.4 H1514.8 M1495.5 274.6 H1514.8" stroke="#333" stroke-width="1.4" /><path d="M1502.6 316.3 A6.6 6.6 0 1 1 1508.3 310.3" stroke="#a6a6a6" stroke-width="1.2" /><rect x="1502.6" y="310.3" width="12.200000000000045" height="12.199999999999989" rx="0.3" stroke="#a6a6a6" stroke-width="1.2" fill="none"/><rect x="1497.3" y="348.1" width="16.5" height="16.19999999999999" rx="1.3" stroke="#a6a6a6" stroke-width="1.2" fill="none"/><path d="M1498.5 363.1 L1505.4 356.2 L1512.7 363.1" stroke="#a6a6a6" stroke-width="1.2" /><circle cx="1508.7" cy="353.1" r="1.5" stroke="#a6a6a6" stroke-width="1" fill="none"/><rect x="1497.3" y="401.5" width="4.100000000000136" height="5.0" rx="0.8" stroke="#a6a6a6" stroke-width="1.2" fill="none"/><rect x="1503.4" y="396.4" width="4.099999999999909" height="10.100000000000023" rx="0.8" stroke="#a6a6a6" stroke-width="1.2" fill="none"/><rect x="1509.5" y="390.4" width="4.2999999999999545" height="16.100000000000023" rx="0.8" stroke="#a6a6a6" stroke-width="1.2" fill="none"/><path d="M1512.7 434.4 H1504.6 Q1498.1 434.4 1498.1 437.7 Q1498.1 441 1504.6 441 H1505.4 M1505.4 434.4 V448.3 M1509.5 434.4 V448.3" stroke="#a6a6a6" stroke-width="1.2" /><path d="M1500.3 486.4 L1505.4 474.7 L1510.7 486.4 M1502.1 482.5 H1508.7" stroke="#a6a6a6" stroke-width="1.2" /><path d="M1498.1 491.7 Q1505.4 485.3 1512.7 491.7" stroke="#a6a6a6" stroke-width="1.2" /><path d="M1505.3 531.4 H1499.8 Q1498.6 531.4 1498.6 530.2 V517.7 Q1498.6 516.5 1499.8 516.5 H1509.1 Q1510.3 516.5 1510.3 517.7 V523.2" stroke="#a6a6a6" stroke-width="1.2" /><rect x="1500.4" y="519.3" width="7.899999999999864" height="2.2000000000000455" rx="0.6" stroke="#a6a6a6" stroke-width="1.1" fill="none"/><path d="M1508.3 524.5 H1500.4 V526.3 H1502.9" stroke="#a6a6a6" stroke-width="1.1" /><path d="M1504.4 526.5 H1514.6 L1510.5 530.3 V535.2 H1508.7 V530.3 Z" stroke="#a6a6a6" stroke-width="1.2" /><path d="M29.5 864 L21.5 871.5 L29.5 879" stroke="#b0b0b0" stroke-width="1.1" /><path d="M52.5 864 L60.5 871.5 L52.5 879" stroke="#b0b0b0" stroke-width="1.1" /><path d="M112.5 864 V879 M105 871.5 H120" stroke="#333" stroke-width="1.3" /><path d="M134 863.5 H151 M134 868.5 H151 M134 873.5 H151 M134 878.5 H151" stroke="#333" stroke-width="1.3" /><path d="M1366 871.5 H1381" stroke="#333" stroke-width="1.3" /><path d="M1503.5 864 V879 M1496 871.5 H1511" stroke="#333" stroke-width="1.3" /></svg>
</body></html>
